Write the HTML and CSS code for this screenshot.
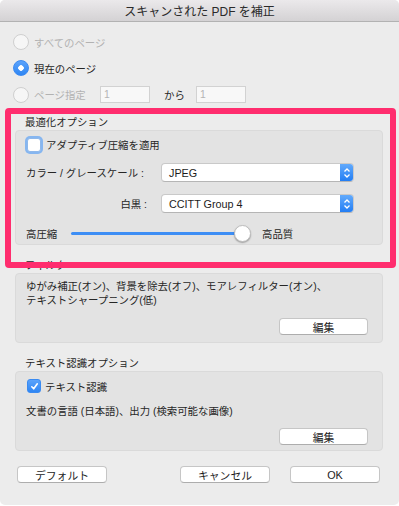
FILE: index.html
```html
<!DOCTYPE html>
<html lang="ja">
<head>
<meta charset="utf-8">
<title>スキャンされた PDF を補正</title>
<link rel="stylesheet" href="styles.css">
</head>
<body>
<div class="window">
  <div class="titlebar">スキャンされた PDF を補正</div>

  <div class="pages">
    <div class="row disabled">
      <span class="radio"></span><span>すべてのページ</span>
    </div>
    <div class="row">
      <span class="radio on"></span><span>現在のページ</span>
    </div>
    <div class="row disabled row3">
      <span class="radio"></span><span class="range-label">ページ指定</span>
      <span class="field">1</span>
      <span class="from">から</span>
      <span class="field">1</span>
    </div>
  </div>

  <div class="group opt">
    <div class="group-label">最適化オプション</div>
    <div class="group-box opt-box">
      <div class="check-row">
        <span class="checkbox focus"></span><span>アダプティブ圧縮を適用</span>
      </div>
      <div class="popup-row first">
        <span class="popup-label">カラー / グレースケール :</span>
        <span class="popup"><span class="popup-text">JPEG</span><span class="stepper"><svg width="8" height="12" viewBox="0 0 8 12"><path d="M1.5 4.5 L4 2 L6.5 4.5 M1.5 7.5 L4 10 L6.5 7.5" fill="none" stroke="#fff" stroke-width="1.3"/></svg></span></span>
      </div>
      <div class="popup-row second">
        <span class="popup-label">白黒 :</span>
        <span class="popup"><span class="popup-text">CCITT Group 4</span><span class="stepper"><svg width="8" height="12" viewBox="0 0 8 12"><path d="M1.5 4.5 L4 2 L6.5 4.5 M1.5 7.5 L4 10 L6.5 7.5" fill="none" stroke="#fff" stroke-width="1.3"/></svg></span></span>
      </div>
      <div class="slider-row">
        <span class="slider-label">高圧縮</span>
        <span class="slider"><span class="track"></span><span class="knob"></span></span>
        <span>高品質</span>
      </div>
    </div>
  </div>

  <div class="group filter">
    <div class="group-label">フィルター</div>
    <div class="group-box filter-box">
      <div class="desc">ゆがみ補正(オン)、背景を除去(オフ)、モアレフィルター(オン)、<br>テキストシャープニング(低)</div>
      <div class="btn-row"><span class="button edit">編集</span></div>
    </div>
  </div>

  <div class="group ocr">
    <div class="group-label">テキスト認識オプション</div>
    <div class="group-box ocr-box">
      <div class="check-row ocr-check">
        <span class="checkbox checked"><svg width="9" height="9" viewBox="0 0 9 9"><path d="M1.8 4.8 L3.7 6.8 L7.3 1.8" fill="none" stroke="#fff" stroke-width="1.6" stroke-linecap="round" stroke-linejoin="round"/></svg></span><span>テキスト認識</span>
      </div>
      <div class="ocr-desc">文書の言語 (日本語)、出力 (検索可能な画像)</div>
      <div class="btn-row ocr-btn"><span class="button edit">編集</span></div>
    </div>
  </div>

  <div class="bottom">
    <span class="button wide">デフォルト</span>
    <span class="button wide cancel">キャンセル</span>
    <span class="button wide">OK</span>
  </div>

  <div class="highlight"></div>
</div>
</body>
</html>
```

FILE: styles.css
```css
html, body {
  margin: 0;
  padding: 0;
  background: #ffffff;
}

body {
  font-family: "Liberation Sans", "Noto Sans CJK JP", sans-serif;
  font-size: 10.4px;
  color: #262626;
}

.window {
  position: relative;
  width: 399px;
  height: 505px;
  background: #ececec;
  border-radius: 5px;
  overflow: hidden;
}

.titlebar {
  height: 21px;
  border-bottom: 1px solid #b2b2b2;
  background: linear-gradient(#ebe9eb, #d4d2d4);
  display: flex;
  align-items: center;
  justify-content: center;
  font-size: 12px;
  color: #2a2a2a;
}

/* page radio rows */
.pages {
  display: flex;
  flex-direction: column;
  gap: 6px;
  padding: 10px 0 0 13px;
}

.row {
  height: 20px;
  display: flex;
  align-items: center;
}

.row3 {
  height: 21px;
}

.row.disabled {
  color: #b2b2b2;
}

.radio {
  width: 14px;
  height: 14px;
  border-radius: 50%;
  border: 1px solid #cfcfcf;
  background: #f6f6f6;
  margin-right: 5px;
  box-sizing: content-box;
  flex: none;
}

.radio.on {
  border-color: #3b8af2;
  background: radial-gradient(circle, #ffffff 0 2.5px, transparent 3px), linear-gradient(#5ba3fb, #2f86f3);
}

.range-label {
  width: 66px;
}

.field {
  width: 45px;
  height: 15px;
  border: 1px solid #d2d2d2;
  background: #f8f8f8;
  color: #b5b5b5;
  padding-left: 3px;
  line-height: 15px;
  flex: none;
}

.from {
  width: 32px;
  padding-left: 14px;
  color: #262626;
  flex: none;
}

/* group boxes */
.group {
  margin: 0 16px 0 15px;
}

.opt {
  margin-top: 11px;
}

.filter,
.ocr {
  margin-top: 14px;
}

.group-label {
  height: 14px;
  line-height: 14px;
  padding-left: 10px;
  color: #262626;
}

.group-box {
  background: #e3e3e3;
  border: 1px solid #dadada;
  border-radius: 4px;
}

.opt-box {
  height: 113px;
  padding: 0 10px;
}

.check-row {
  display: flex;
  align-items: center;
  height: 15px;
  margin-top: 6px;
}

.checkbox {
  width: 12px;
  height: 12px;
  border-radius: 3px;
  background: #ffffff;
  border: 1px solid #b9b9b9;
  margin-right: 4px;
  flex: none;
  display: flex;
  align-items: center;
  justify-content: center;
}

.checkbox.focus {
  border-color: #8fb8ea;
  box-shadow: 0 0 0 2px #86b6f0;
  margin-left: 1px;
  margin-right: 5px;
}

.checkbox.checked {
  background: linear-gradient(#5ba3fb, #2f86f3);
  border-color: #3a8bf2;
  margin-left: 1px;
}

.popup-row {
  display: flex;
  align-items: center;
  height: 19px;
}

.popup-row.first {
  margin-top: 11px;
}

.popup-row.second {
  margin-top: 12px;
}

.popup-label {
  width: 121px;
  text-align: right;
  margin-right: 14px;
  white-space: nowrap;
  flex: none;
}

.first .popup-label {
  text-align: left;
}

.popup {
  width: 193px;
  height: 19px;
  box-sizing: border-box;
  background: #ffffff;
  border: 1px solid #c9c9c9;
  border-bottom-color: #b5b5b5;
  border-radius: 4px;
  display: flex;
  align-items: center;
  overflow: hidden;
  font-size: 10.8px;
  color: #1c1c1c;
}

.popup-text {
  flex: 1;
  padding-left: 7px;
}

.stepper {
  width: 14px;
  height: 19px;
  margin-right: -1px;
  background: linear-gradient(#66adfd, #1f7bf3);
  display: flex;
  align-items: center;
  justify-content: center;
  border-radius: 0 4px 4px 0;
}

.slider-row {
  display: flex;
  align-items: center;
  height: 16px;
  margin-top: 12px;
}

.slider-label {
  width: 45px;
  flex: none;
}

.slider {
  position: relative;
  width: 182px;
  height: 16px;
  margin-right: 9px;
  flex: none;
  display: flex;
  align-items: center;
}

.track {
  width: 170px;
  height: 3px;
  border-radius: 2px;
  background: #3d8ef5;
}

.knob {
  position: absolute;
  right: 2px;
  top: 0;
  width: 15px;
  height: 15px;
  border-radius: 50%;
  background: #ffffff;
  border: 0.5px solid #bdbdbd;
  box-shadow: 0 1px 1.5px rgba(0, 0, 0, 0.3);
}

/* filter */
.filter-box {
  padding: 6px 14px 7px 10px;
}

.desc {
  line-height: 14px;
}

.btn-row {
  display: flex;
  justify-content: flex-end;
  margin-top: 10px;
}

.button {
  width: 89px;
  height: 17px;
  box-sizing: border-box;
  background: #ffffff;
  border: 1px solid #c6c6c6;
  border-bottom-color: #adadad;
  border-radius: 4px;
  display: flex;
  align-items: center;
  justify-content: center;
  color: #1c1c1c;
  font-size: 10.8px;
}

/* ocr */
.ocr-box {
  padding: 0 14px 5px 10px;
}

.ocr-check {
  height: 14px;
  margin-top: 7px;
}

.ocr-desc {
  line-height: 14px;
  margin-top: 12px;
}

.ocr-btn {
  margin-top: 9px;
}

/* bottom buttons */
.bottom {
  display: flex;
  margin-top: 15px;
  padding: 0 19px 0 17px;
}

.wide {
  width: 90px;
}

.cancel {
  margin-left: auto;
  margin-right: 20px;
}

/* annotation highlight */
.highlight {
  position: absolute;
  left: 5px;
  top: 108px;
  width: 391px;
  height: 160px;
  box-sizing: border-box;
  border: 6px solid #ff2d6e;
  border-radius: 4px;
  pointer-events: none;
}
```
